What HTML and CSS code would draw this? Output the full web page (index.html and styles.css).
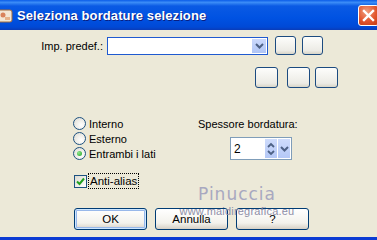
FILE: index.html
```html
<!DOCTYPE html>
<html lang="it">
<head>
  <meta charset="UTF-8" />
  <title>Seleziona bordature selezione</title>
  <link rel="stylesheet" href="styles.css">
</head>
<body>
  <div class="window">
    <header class="titlebar">
      <svg class="app-icon" width="14" height="16" viewBox="0 0 14 16">
        <rect x="-2" y="2" width="14" height="12" rx="2" fill="#f3e6d4" stroke="#a06a3c"/>
        <circle cx="3" cy="7" r="2.5" fill="#d9825b"/>
        <rect x="5" y="9" width="5" height="3" fill="#e6b28a"/>
      </svg>
      <h1>Seleziona bordature selezione</h1>
      <button class="close" aria-label="Chiudi">
        <svg width="13" height="13" viewBox="0 0 13 13">
          <path d="M2 2 L11 11 M11 2 L2 11" stroke="#fff" stroke-width="2.4" stroke-linecap="square"/>
        </svg>
      </button>
    </header>

    <main class="body">
      <div class="preset-row">
        <label class="preset-label">Imp. predef.:</label>
        <div class="combo">
          <span class="combo-btn">
            <svg width="9" height="6" viewBox="0 0 9 6"><path d="M1 1 L4.5 4.5 L8 1" fill="none" stroke="#4d6185" stroke-width="2"/></svg>
          </span>
        </div>
        <button class="sq-btn small"></button>
        <button class="sq-btn small"></button>
      </div>

      <div class="tools-row">
        <button class="sq-btn big"></button>
        <button class="sq-btn big wide-gap"></button>
        <button class="sq-btn big"></button>
      </div>

      <div class="options">
        <div class="radios">
          <div class="radio-item"><span class="radio"></span><span>Interno</span></div>
          <div class="radio-item"><span class="radio"></span><span>Esterno</span></div>
          <div class="radio-item"><span class="radio checked"></span><span>Entrambi i lati</span></div>
        </div>
        <div class="thickness">
          <div class="thickness-label">Spessore bordatura:</div>
          <div class="spinner">
            <span class="spin-value">2</span>
            <span class="spin-updown">
              <svg width="8" height="14" viewBox="0 0 8 14"><path d="M1 5 L4 2 L7 5 M1 9 L4 12 L7 9" fill="none" stroke="#4d6185" stroke-width="1.8"/></svg>
            </span>
            <span class="spin-drop">
              <svg width="9" height="6" viewBox="0 0 9 6"><path d="M1 1 L4.5 4.5 L8 1" fill="none" stroke="#4d6185" stroke-width="2"/></svg>
            </span>
          </div>
        </div>
      </div>

      <div class="check-row">
        <span class="checkbox">
          <svg width="9" height="9" viewBox="0 0 9 9"><path d="M1 4.5 L3.5 7 L8 1.5" fill="none" stroke="#21a121" stroke-width="2"/></svg>
        </span>
        <span class="check-label">Anti-alias</span>
      </div>

      <div class="actions">
        <button class="push default">OK</button>
        <button class="push">Annulla</button>
        <button class="push">?</button>
      </div>

      <div class="watermark">
        <div class="wm-name">Pinuccia</div>
        <div class="wm-url">www.maidiregrafica.eu</div>
      </div>
    </main>
  </div>
</body>
</html>
```

FILE: styles.css
```css
* { box-sizing: border-box; margin: 0; padding: 0; }
body {
  width: 377px;
  height: 240px;
  overflow: hidden;
  font-family: 'Liberation Sans', Arial, sans-serif;
  font-size: 11px;
  color: #000;
  background: #ece9d8;
}
.window {
  height: 240px;
  border-bottom: 3px solid #0b3bd3;
  display: flex;
  flex-direction: column;
}
.titlebar {
  height: 30px;
  display: flex;
  align-items: center;
  background: linear-gradient(to bottom, #0a5ce8 0%, #3b8cf7 8%, #0a5ae4 20%, #0052e2 60%, #0049d6 90%, #0a3cb8 100%);
  color: #fff;
}
.app-icon { margin-left: 0; margin-top: 1px; }
.titlebar h1 {
  flex: 1;
  margin-left: 3px;
  font-family: 'Liberation Sans', Arial, sans-serif;
  font-size: 13px;
  font-weight: bold;
  letter-spacing: 0.1px;
  text-shadow: 1px 1px 0 #0a1e80;
}
.close {
  width: 21px;
  height: 21px;
  margin-right: -2px;
  border: 1px solid #fff;
  border-radius: 3px;
  background: radial-gradient(circle at 40% 30%, #f0a080, #e2542d 55%, #c23a10);
  display: flex;
  align-items: center;
  justify-content: center;
}
.body {
  position: relative;
  flex: 1;
}
.preset-row {
  margin-top: 6px;
  display: flex;
  align-items: center;
  height: 19px;
}
.preset-label {
  width: 104px;
  text-align: right;
  padding-right: 1px;
}
.combo {
  width: 161px;
  height: 18px;
  margin-left: 3px;
  background: #fff;
  border: 1px solid #1f5ad0;
  display: flex;
  justify-content: flex-end;
  padding: 1px;
}
.combo-btn {
  width: 14px;
  background: linear-gradient(#cbd9fc, #b0c5f5);
  display: flex;
  align-items: center;
  justify-content: center;
}
.sq-btn {
  border: 1px solid #1c4b80;
  border-radius: 3px;
  background: linear-gradient(#fdfdfb, #ecebe5 80%, #d8d5c8);
}
.sq-btn.small { width: 21px; height: 19px; margin-left: 7px; }
.sq-btn.small + .sq-btn.small { margin-left: 6px; }
.tools-row {
  margin-top: 12px;
  display: flex;
  justify-content: flex-end;
  padding-right: 39px;
  gap: 5px;
}
.sq-btn.big { width: 23px; height: 21px; }
.sq-btn.wide-gap { margin-left: 4px; }
.options {
  margin-top: 28px;
  display: flex;
}
.radios {
  margin-left: 73px;
  width: 125px;
}
.radio-item {
  height: 15px;
  display: flex;
  align-items: center;
  gap: 3px;
}
.radio {
  width: 13px;
  height: 13px;
  border-radius: 50%;
  border: 1px solid #1c5180;
  background: radial-gradient(circle at 65% 65%, #fff, #dcdad0);
  display: flex;
  align-items: center;
  justify-content: center;
}
.radio.checked::after {
  content: '';
  width: 5px;
  height: 5px;
  border-radius: 50%;
  background: radial-gradient(circle at 35% 35%, #8fe78f, #21a121);
}
.thickness-label { margin-top: 2px; }
.thickness .spinner {
  margin-top: 7px;
  margin-left: 32px;
  width: 62px;
  height: 23px;
  background: #fff;
  border: 1px solid #7f9db9;
  display: flex;
  align-items: center;
  padding: 1px;
}
.spin-value {
  flex: 1;
  font-size: 12px;
  padding-left: 2px;
}
.spin-updown, .spin-drop {
  width: 12px;
  height: 19px;
  margin-left: 1px;
  background: linear-gradient(#cfdcfc, #b4c8f6);
  display: flex;
  align-items: center;
  justify-content: center;
}
.check-row {
  margin-top: 12px;
  margin-left: 74px;
  display: flex;
  align-items: center;
  height: 16px;
}
.checkbox {
  width: 13px;
  height: 13px;
  border: 1px solid #1c5180;
  background: linear-gradient(135deg, #dcdad0, #fff);
  display: flex;
  align-items: center;
  justify-content: center;
}
.check-label {
  margin-left: 1px;
  padding: 1px 1px;
  border: 1px dotted #000;
  font-size: 11.5px;
}
.actions {
  margin-top: 19px;
  margin-left: 74px;
  display: flex;
  gap: 8px;
}
.push {
  width: 73px;
  height: 22px;
  border: 1px solid #003c74;
  border-radius: 3px;
  background: linear-gradient(#fff, #f3f2ec 70%, #d6d0c5);
  font-family: 'Liberation Sans', Arial, sans-serif;
  font-size: 11.5px;
  color: #000;
}
.push.default {
  box-shadow: inset 0 0 0 1px #cee7ff, inset 0 0 0 2px #98b8ea;
}
.watermark {
  position: absolute;
  left: 176px;
  top: 155px;
  width: 122px;
  text-align: center;
  pointer-events: none;
}
.wm-name {
  font-family: 'DejaVu Sans', sans-serif;
  font-size: 17px;
  color: #a8a8c0;
  letter-spacing: 1px;
  line-height: 18px;
}
.wm-url {
  margin-top: 2px;
  font-size: 11px;
  color: #8e8ea8;
  letter-spacing: 0.2px;
}
```
